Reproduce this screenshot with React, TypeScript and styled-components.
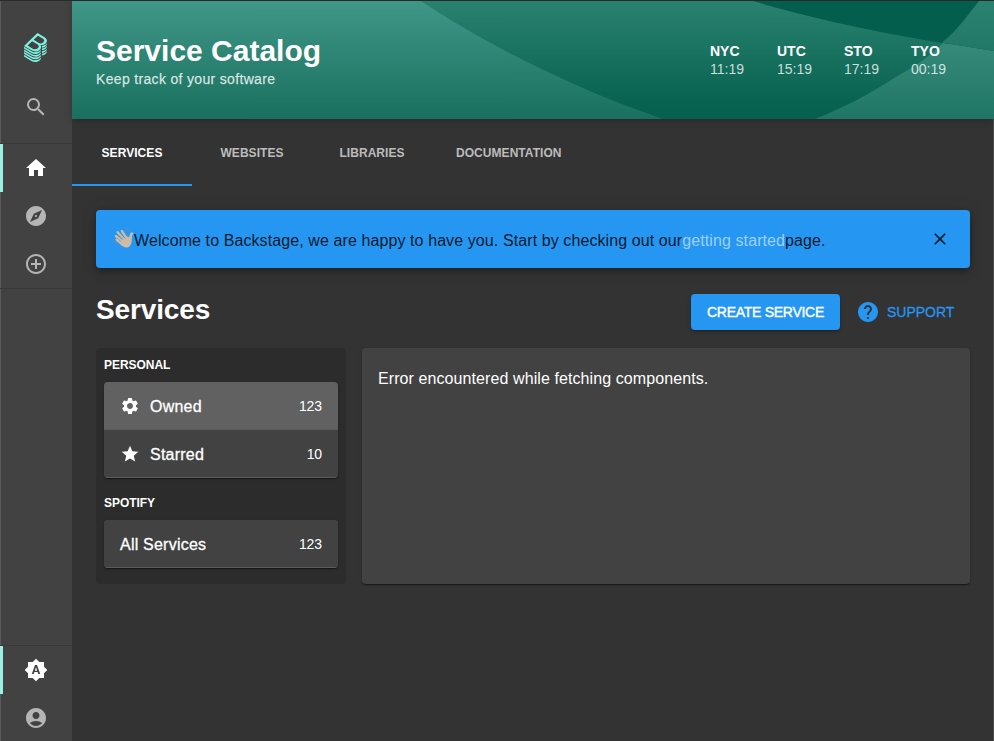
import React from 'react';
import styled, { createGlobalStyle } from 'styled-components';
import {
  MdSearch,
  MdHome,
  MdExplore,
  MdAddCircleOutline,
  MdBrightnessAuto,
  MdAccountCircle,
  MdClose,
  MdHelp,
  MdSettings,
  MdStar,
} from 'react-icons/md';

const GlobalStyle = createGlobalStyle`
  * { box-sizing: border-box; }
  body {
    margin: 0;
    background: #333333;
    color: #fff;
    font-family: "Liberation Sans", Arial, sans-serif;
    overflow: hidden;
  }
  button { font-family: inherit; }
`;

const Window = styled.div`
  display: flex;
  width: 994px;
  height: 742px;
  border-top: 1px solid #2b2b2b;
  background: #333333;
`;

const Sidebar = styled.nav`
  display: flex;
  flex-direction: column;
  flex: none;
  width: 72px;
  background: #424242;
  box-shadow: inset 1px 0 0 #5b5b5b;
`;

const LogoBox = styled.div`
  display: flex;
  justify-content: center;
  height: 82px;
  padding: 32px 2px 0 0;
`;

const SideItem = styled.a<{ $active?: boolean }>`
  display: flex;
  align-items: center;
  justify-content: center;
  height: 48px;
  padding-right: ${(p) => (p.$active ? 3 : 0)}px;
  border-left: ${(p) => (p.$active ? '3px solid #9bf0e1' : '0')};
  color: ${(p) => (p.$active ? '#fff' : '#b5b5b5')};
  svg { display: block; }
`;

const SideDivider = styled.div<{ $top?: number }>`
  height: 1px;
  margin-top: ${(p) => p.$top ?? 0}px;
  background: #383838;
`;

const Spacer = styled.div`
  flex: 1;
`;

const Main = styled.main`
  display: flex;
  flex-direction: column;
  flex: 1;
  min-width: 0;
  box-shadow: inset -1px 0 0 #4c4c4c;
`;

const Header = styled.header`
  position: relative;
  display: flex;
  justify-content: space-between;
  height: 118px;
  padding: 31px 24px 0;
  box-shadow: 0 2px 8px rgba(0, 0, 0, 0.2);
`;

const HeaderWave = styled.svg`
  position: absolute;
  inset: 0;
  display: block;
`;

const HeaderText = styled.div`
  position: relative;
`;

const Title = styled.h1`
  margin: 0;
  font-size: 30px;
  line-height: 37px;
  font-weight: 700;
`;

const Subtitle = styled.div`
  font-size: 14px;
  line-height: 18px;
  letter-spacing: 0.33px;
  margin-top: 1px;
  color: rgba(255, 255, 255, 0.8);
  -webkit-text-stroke: 0.25px rgba(255, 255, 255, 0.6);
`;

const Clocks = styled.div`
  position: relative;
  display: flex;
  padding: 10px 0 0;
`;

const Clock = styled.div`
  width: 67px;
  font-size: 14px;
  line-height: 18px;
  white-space: nowrap;
  &:last-child { width: 59px; }
  span { color: rgba(255, 255, 255, 0.78); }
`;

const City = styled.div`
  font-weight: 700;
`;

const Tabs = styled.div`
  display: flex;
  height: 67px;
`;

const Tab = styled.div<{ $active?: boolean }>`
  display: flex;
  align-items: center;
  justify-content: center;
  min-width: 120px;
  padding: 0 24px;
  border-top: 2px solid transparent;
  border-bottom: 2px solid ${(p) => (p.$active ? '#2196f3' : 'transparent')};
  color: ${(p) => (p.$active ? '#fff' : '#bcbcbc')};
  font-size: 12px;
  font-weight: 700;
  letter-spacing: 0.05px;
`;

const Content = styled.div`
  display: flex;
  flex-direction: column;
  padding: 24px 24px 0;
`;

const Banner = styled.div`
  display: flex;
  align-items: center;
  height: 58px;
  padding: 0 18px 0 16px;
  border-radius: 4px;
  background: #2596f1;
  color: rgba(0, 0, 0, 0.85);
  font-size: 16px;
  box-shadow: 0 3px 5px -1px rgba(0, 0, 0, 0.2), 0 5px 9px rgba(0, 0, 0, 0.14), 0 1px 16px rgba(0, 0, 0, 0.12);
`;

const BannerText = styled.div`
  flex: 1;
  padding-top: 4px;
  letter-spacing: 0.095px;
  white-space: nowrap;
`;

const BannerLink = styled.a`
  color: #9ed1ff;
`;

const WaveIcon = styled.svg`
  display: block;
  flex: none;
  margin-top: -2px;
`;

const CloseButton = styled.button`
  display: flex;
  padding: 0;
  margin: -1px 2px 0 0;
  border: 0;
  background: none;
  color: #0b1d2d;
`;

const HeadingRow = styled.div`
  display: flex;
  align-items: center;
  height: 36px;
  margin-top: 26px;
`;

const Heading = styled.h2`
  flex: 1;
  margin: -4px 0 0;
  font-size: 28px;
  line-height: 36px;
  font-weight: 700;
  letter-spacing: -0.14px;
`;

const CreateButton = styled.button`
  width: 149px;
  height: 36px;
  padding: 0;
  border: 0;
  border-radius: 4px;
  background: #2596f1;
  color: #fff;
  font-size: 14px;
  letter-spacing: -0.28px;
  white-space: nowrap;
  -webkit-text-stroke: 0.4px #fff;
  box-shadow: 0 3px 1px -2px rgba(0, 0, 0, 0.2), 0 2px 2px rgba(0, 0, 0, 0.14), 0 1px 5px rgba(0, 0, 0, 0.12);
`;

const SupportButton = styled.button`
  display: flex;
  align-items: center;
  gap: 7px;
  width: 114px;
  margin-left: 16px;
  padding: 0;
  border: 0;
  background: none;
  color: #2596f1;
  font-size: 14px;
  span { -webkit-text-stroke: 0.3px #2596f1; }
`;

const Panels = styled.div`
  display: flex;
  gap: 16px;
  height: 236px;
  margin-top: 18px;
`;

const FilterPanel = styled.aside`
  width: 250px;
  padding: 0 8px;
  border-radius: 4px;
  background: #2c2c2c;
`;

const GroupTitle = styled.div<{ $top: number }>`
  height: ${(p) => p.$top + 25}px;
  padding-top: ${(p) => p.$top}px;
  font-size: 12px;
  line-height: 16px;
  font-weight: 700;
  letter-spacing: -0.05px;
`;

const Card = styled.div`
  overflow: hidden;
  border-radius: 4px;
  background: #424242;
  box-shadow: 0 2px 1px -1px rgba(0, 0, 0, 0.2), 0 1px 1px rgba(0, 0, 0, 0.3), 0 1px 3px rgba(0, 0, 0, 0.12);
`;

const FilterRow = styled.div<{ $selected?: boolean }>`
  display: flex;
  align-items: center;
  height: 48px;
  padding: 0 16px;
  border-bottom: 1px solid ${(p) => (p.$selected ? '#5a5a5a' : '#5c5c5c')};
  background: ${(p) => (p.$selected ? '#616161' : '#424242')};
  font-size: 16px;
  svg { margin-right: 10px; }
`;

const RowLabel = styled.span`
  flex: 1;
  padding-top: 3px;
  letter-spacing: 0.22px;
  -webkit-text-stroke: 0.3px #fff;
`;

const RowCount = styled.span`
  font-size: 14px;
  letter-spacing: -0.1px;
`;

const ResultPanel = styled(Card)`
  flex: 1;
  padding: 21px 16px;
  font-size: 16px;
  line-height: 20px;
  letter-spacing: 0.09px;
`;

const LOGO_PATH =
  'M303,166.05a80.69,80.69,0,0,0,13.45-10.37c.79-.77,1.55-1.53,2.3-2.3a83.12,83.12,0,0,0,7.93-9.38A63.69,63.69,0,0,0,333,133.23a48.58,48.58,0,0,0,4.35-16.4c1.49-19.39-10-38.67-35.62-54.22L198.56,0,78.3,115.23,0,190.25l108.6,65.91a111.59,111.59,0,0,0,57.76,16.41c24.92,0,48.8-8.8,66.42-25.69,19.16-18.36,25.52-42.12,13.7-61.87a49.22,49.22,0,0,0-6.8-8.87A89.17,89.17,0,0,0,259,178.29h.15a85.08,85.08,0,0,0,31-5.79A80.88,80.88,0,0,0,303,166.05ZM202.45,225.86c-19.32,18.51-50.4,21.23-75.7,5.9L51.61,186.15l67.45-64.64,76.41,46.38C223,184.58,221.49,207.61,202.45,225.86Zm8.93-82.22-70.65-42.89L205.14,39,274.51,81.1c25.94,15.72,29.31,37,10.55,55A60.69,60.69,0,0,1,211.38,143.64Zm29.86,190c-19.57,18.75-46.17,29.09-74.88,29.09a123.73,123.73,0,0,1-64.1-18.2L0,282.52v24.67L108.6,373.1a111.6,111.6,0,0,0,57.76,16.42c24.92,0,48.8-8.81,66.42-25.69,12.88-12.34,20-27.13,19.68-41.49v-1.79A87.27,87.27,0,0,1,241.24,333.68Zm0-39c-19.57,18.75-46.17,29.08-74.88,29.08a123.81,123.81,0,0,1-64.1-18.19L0,243.53v24.68l108.6,65.91a111.6,111.6,0,0,0,57.76,16.42c24.92,0,48.8-8.81,66.42-25.69,12.88-12.34,20-27.13,19.68-41.5v-1.78A87.27,87.27,0,0,1,241.24,294.7Zm0-39c-19.57,18.76-46.17,29.09-74.88,29.09a123.81,123.81,0,0,1-64.1-18.19L0,204.55v24.68l108.6,65.91a111.59,111.59,0,0,0,57.76,16.41c24.92,0,48.8-8.8,66.42-25.68,12.88-12.35,20-27.13,19.68-41.5v-1.82A86.09,86.09,0,0,1,241.24,255.71Zm83.7,25.74a94.15,94.15,0,0,1-60.2,25.86h0V334a81.6,81.6,0,0,0,51.74-22.37c14-13.38,21.14-28.11,21-42.64v-2.19A94.92,94.92,0,0,1,324.94,281.45Zm-83.7,91.21c-19.57,18.76-46.17,29.09-74.88,29.09a123.73,123.73,0,0,1-64.1-18.2L0,321.5v24.68l108.6,65.9a111.6,111.6,0,0,0,57.76,16.42c24.92,0,48.8-8.8,66.42-25.69,12.88-12.34,20-27.13,19.68-41.49v-1.79A86.29,86.29,0,0,1,241.24,372.66ZM327,162.45c-.68.69-1.35,1.38-2.05,2.06a94.37,94.37,0,0,1-10.64,8.65,91.35,91.35,0,0,1-11.6,7,94.53,94.53,0,0,1-26.24,8.71,97.69,97.69,0,0,1-14.16,1.57c.5,1.61.9,3.25,1.25,4.9a53.27,53.27,0,0,1,1.14,12V217h.05a84.41,84.41,0,0,0,25.35-5.55,81,81,0,0,0,26.39-16.82c.8-.77,1.5-1.56,2.26-2.34a82.08,82.08,0,0,0,7.93-9.38A63.76,63.76,0,0,0,333,172.17a48.55,48.55,0,0,0,4.32-16.45c.09-1.23.2-2.47.19-3.7V150q-1.08,1.54-2.25,3.09A96.73,96.73,0,0,1,327,162.45Zm0,77.92c-.69.7-1.31,1.41-2,2.1a94.2,94.2,0,0,1-60.2,25.86h0l0,26.67h0a81.6,81.6,0,0,0,51.74-22.37A73.51,73.51,0,0,0,333,250.13a48.56,48.56,0,0,0,4.32-16.44c.09-1.24.2-2.47.19-3.71v-2.19c-.74,1.07-1.46,2.15-2.27,3.21A95.68,95.68,0,0,1,327,240.37Zm0-39c-.69.7-1.31,1.41-2,2.1a93.18,93.18,0,0,1-10.63,8.65,91.63,91.63,0,0,1-11.63,7,95.47,95.47,0,0,1-37.94,10.18h0V256h0a81.65,81.65,0,0,0,51.74-22.37A73.51,73.51,0,0,0,333,211.13a48.56,48.56,0,0,0,4.32-16.44c.09-1.24.2-2.47.19-3.71v-2.2c-.74,1.08-1.46,2.16-2.27,3.22A95.68,95.68,0,0,1,327,201.39Z';

const clocks = [
  { city: 'NYC', time: '11:19' },
  { city: 'UTC', time: '15:19' },
  { city: 'STO', time: '17:19' },
  { city: 'TYO', time: '00:19' },
];

const tabs = ['SERVICES', 'WEBSITES', 'LIBRARIES', 'DOCUMENTATION'];

function WavingHand() {
  return (
    <WaveIcon width="22" height="22" viewBox="0 0 22 22" fill="none" strokeLinecap="round">
      <g stroke="#cdbda8" strokeWidth="2.3">
        <path d="M4.6 12.6 10 17.4" />
        <path d="M3.9 9 11 14.8" />
        <path d="M5.6 5.2 13 13.4" />
        <path d="M9.8 4 15 11.8" />
        <path d="M20 6.6C18.7 7.6 18.6 9.5 18.4 12" strokeWidth="2.5" />
      </g>
      <path d="M8 14.2 14.4 9.4 19.5 10.6C20 15 19.4 17.6 17.4 19.4 15 21.6 11.6 20.6 9 17.8Z" fill="#cdbda8" />
      <g stroke="#93897b" strokeWidth=".5">
        <path d="M5.4 11.4 9.4 14.8" />
        <path d="M6 7.6 11.4 13" />
        <path d="M8.8 6 13.4 11.4" />
      </g>
      <g stroke="#5f8fbc" strokeWidth=".8">
        <path d="M.8 15C1.4 17 2.6 18.2 4.6 18.8" />
        <path d="M2.8 14.6C3.4 16 4.2 16.6 5.6 17.2" />
        <path d="M13.4 1.2C15.4 1.6 17 2.8 17.6 4.6" />
        <path d="M13 3C14.4 3.4 15.4 4.4 15.8 5.6" />
      </g>
    </WaveIcon>
  );
}

function HeaderBackground() {
  return (
    <HeaderWave width="922" height="118" viewBox="0 0 922 118">
      <defs>
        <linearGradient id="base" x1="0" y1="0" x2="0" y2="1">
          <stop offset="0" stopColor="#409787" />
          <stop offset="1" stopColor="#19705f" />
        </linearGradient>
        <linearGradient id="mid" gradientUnits="userSpaceOnUse" x1="0" y1="0" x2="0" y2="118">
          <stop offset="0" stopColor="#2a8170" />
          <stop offset=".85" stopColor="#096351" />
          <stop offset="1" stopColor="#06604e" />
        </linearGradient>
        <linearGradient id="right" gradientUnits="userSpaceOnUse" x1="0" y1="30" x2="0" y2="118">
          <stop offset="0" stopColor="#398d7d" />
          <stop offset="1" stopColor="#207665" />
        </linearGradient>
        <linearGradient id="corner" gradientUnits="userSpaceOnUse" x1="0" y1="0" x2="0" y2="50">
          <stop offset="0" stopColor="#2c8271" />
          <stop offset="1" stopColor="#217866" />
        </linearGradient>
      </defs>
      <path d="M0 0H922V118H0Z" fill="url(#base)" />
      <path d="M349 0C418 46 506 89 591 118H922V0Z" fill="url(#mid)" />
      <path d="M907 0C875 40 861 56 827 74C798 93 773 106 743 118H922V0Z" fill="url(#right)" />
      <path d="M681 0C737 17 822 35 882 43.5L922 50V0Z" fill="#045e4d" />
      <path d="M907 0C895 15 884 31 870 41.5L922 50V0Z" fill="url(#corner)" />
    </HeaderWave>
  );
}

export default function App() {
  return (
    <>
      <GlobalStyle />
      <Window>
        <Sidebar>
          <LogoBox>
            <svg width="23" height="29" viewBox="0 0 337.46 428.5" fill="#7df3e1">
              <path d={LOGO_PATH} />
            </svg>
          </LogoBox>
          <SideItem><MdSearch size={24} /></SideItem>
          <SideDivider $top={12} />
          <SideItem $active><MdHome size={24} /></SideItem>
          <SideItem><MdExplore size={24} /></SideItem>
          <SideItem><MdAddCircleOutline size={24} /></SideItem>
          <SideDivider />
          <Spacer />
          <SideDivider />
          <SideItem $active><MdBrightnessAuto size={24} /></SideItem>
          <SideItem><MdAccountCircle size={24} /></SideItem>
        </Sidebar>
        <Main>
          <Header>
            <HeaderBackground />
            <HeaderText>
              <Title>Service Catalog</Title>
              <Subtitle>Keep track of your software</Subtitle>
            </HeaderText>
            <Clocks>
              {clocks.map((c) => (
                <Clock key={c.city}>
                  <City>{c.city}</City>
                  <span>{c.time}</span>
                </Clock>
              ))}
            </Clocks>
          </Header>
          <Tabs>
            {tabs.map((label, i) => (
              <Tab key={label} $active={i === 0}>{label}</Tab>
            ))}
          </Tabs>
          <Content>
            <Banner>
              <WavingHand />
              <BannerText>
                Welcome to Backstage, we are happy to have you. Start by checking out our
                <BannerLink>getting started</BannerLink>page.
              </BannerText>
              <CloseButton aria-label="Close"><MdClose size={20} /></CloseButton>
            </Banner>
            <HeadingRow>
              <Heading>Services</Heading>
              <CreateButton>CREATE SERVICE</CreateButton>
              <SupportButton><MdHelp size={24} /><span>SUPPORT</span></SupportButton>
            </HeadingRow>
            <Panels>
              <FilterPanel>
                <GroupTitle $top={9}>PERSONAL</GroupTitle>
                <Card>
                  <FilterRow $selected>
                    <MdSettings size={20} />
                    <RowLabel>Owned</RowLabel>
                    <RowCount>123</RowCount>
                  </FilterRow>
                  <FilterRow>
                    <MdStar size={20} />
                    <RowLabel>Starred</RowLabel>
                    <RowCount>10</RowCount>
                  </FilterRow>
                </Card>
                <GroupTitle $top={17}>SPOTIFY</GroupTitle>
                <Card>
                  <FilterRow>
                    <RowLabel>All Services</RowLabel>
                    <RowCount>123</RowCount>
                  </FilterRow>
                </Card>
              </FilterPanel>
              <ResultPanel>Error encountered while fetching components.</ResultPanel>
            </Panels>
          </Content>
        </Main>
      </Window>
    </>
  );
}
